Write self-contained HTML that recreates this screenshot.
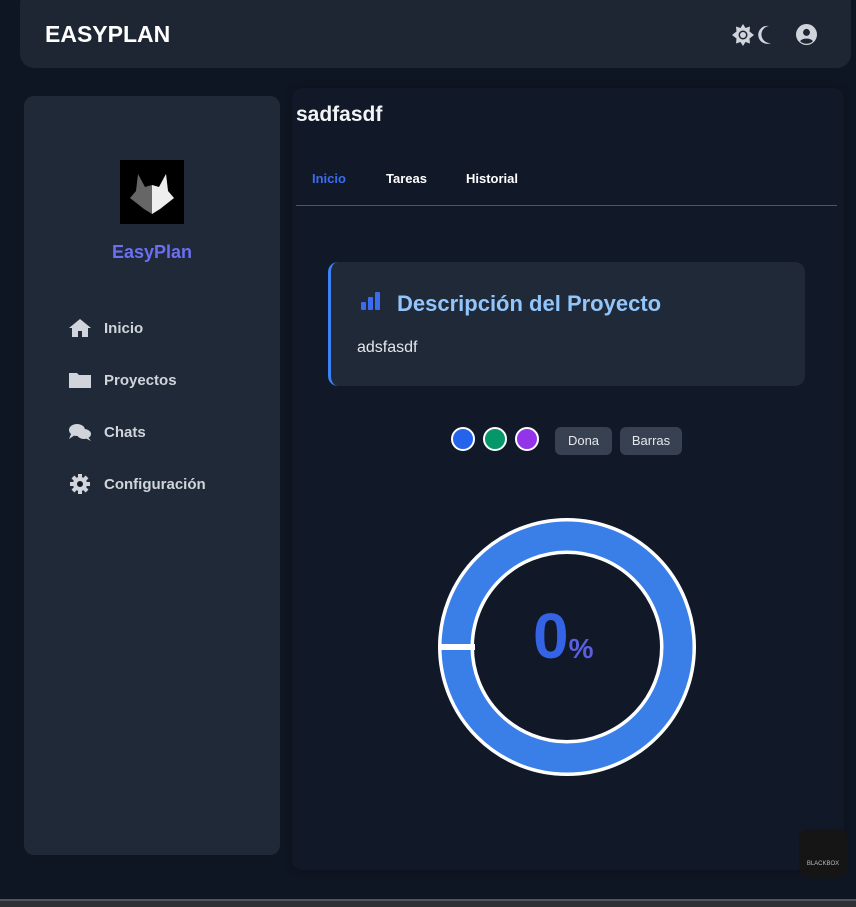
<!DOCTYPE html>
<html><head><meta charset="utf-8"><style>
*{box-sizing:border-box;margin:0;padding:0}
body{width:856px;height:907px;background:#0f1623;font-family:"Liberation Sans",sans-serif;position:relative;overflow:hidden;color:#e5e7eb}
.hdr{position:absolute;left:20px;top:-10px;width:831px;height:78px;background:#1e2533;border-radius:14px}
.hdr h1{position:absolute;left:25px;top:31px;font-size:23px;font-weight:bold;color:#fff}
.side{position:absolute;left:24px;top:96px;width:256px;height:759px;background:#1f2937;border-radius:10px}
.main{position:absolute;left:292px;top:88px;width:552px;height:782px;background:#111827;border-radius:10px;box-shadow:0 0 8px rgba(0,0,0,.3)}
.nav{position:absolute;left:44px;display:flex;align-items:center;font-size:15px;font-weight:bold;color:#d1d5db}
.nav svg{width:24px;height:20px;margin-right:12px;fill:#d1d5db}
.tab{position:absolute;top:171px;font-size:13px;font-weight:bold;color:#fff}
.card{position:absolute;left:328px;top:262px;width:477px;height:124px;background:#1f2937;border-radius:10px;border-left:3px solid #3b82f6}
.dot{position:absolute;top:427px;width:24px;height:24px;border-radius:50%;border:2px solid #fff}
.btn{position:absolute;top:427px;height:28px;background:#374151;border-radius:6px;font-size:13px;color:#e5e7eb;line-height:28px;text-align:center}
</style></head><body>
<div class="hdr"><h1>EASYPLAN</h1>
<svg style="position:absolute;left:712px;top:34px" width="22" height="22" viewBox="0 0 22 22"><polygon points="11,0 13.5,4 18,2.5 17.5,7.5 22,11 17.5,14.5 18,19.5 13.5,18 11,22 8.5,18 4,19.5 4.5,14.5 0,11 4.5,7.5 4,2.5 8.5,4" fill="#d1d5db"/><circle cx="11" cy="11" r="4.5" fill="#1e2533"/><circle cx="11" cy="11" r="3" fill="#d1d5db"/></svg>
<svg style="position:absolute;left:736px;top:34px" width="18" height="22" viewBox="0 0 18 22"><path d="M13 2A9 9 0 1 0 15 19A7.5 7.5 0 0 1 13 2Z" fill="#d1d5db"/></svg>
<svg style="position:absolute;left:776px;top:34px" width="21" height="21" viewBox="0 0 20 20"><circle cx="10" cy="10" r="10" fill="#d1d5db"/><circle cx="10" cy="8" r="3.3" fill="#1e2533"/><path d="M4 16.5C5 13 15 13 16 16.5A9 9 0 0 1 4 16.5Z" fill="#1e2533"/></svg>
</div>
<div class="side">
<div style="position:absolute;left:96px;top:64px;width:64px;height:64px;background:#000">
<svg width="64" height="64" viewBox="0 0 64 64"><path d="M18 14L25 27L32 25L39 27L46 14L48 31L54 38L40 49L32 54L24 49L10 38L16 31Z" fill="#666"/><path d="M32 25L39 27L46 14L48 31L54 38L40 49L32 54Z" fill="#eee"/></svg></div>
<div style="position:absolute;top:146px;width:100%;text-align:center;font-size:18px;font-weight:bold;color:#6b6ff0">EasyPlan</div>
</div>
<div class="nav" style="left:68px;top:318px"><svg viewBox="0 0 24 20"><path d="M12 1L1 10H4V19H10V13H14V19H20V10H23Z"/></svg>Inicio</div>
<div class="nav" style="left:68px;top:370px"><svg viewBox="0 0 24 20"><path d="M1 3H9L11 5H23V18H1Z"/></svg>Proyectos</div>
<div class="nav" style="left:68px;top:422px"><svg viewBox="0 0 24 20"><ellipse cx="9" cy="8" rx="8" ry="6"/><path d="M3 12L1 17L7 13Z"/><ellipse cx="16" cy="12" rx="7" ry="5"/><path d="M20 15L23 19L17 16Z"/></svg>Chats</div>
<div class="nav" style="left:68px;top:474px"><svg viewBox="0 0 24 20"><circle cx="12" cy="10" r="7"/><g><rect x="10" y="0" width="4" height="20"/><rect x="2" y="8" width="20" height="4"/><rect x="10" y="0" width="4" height="20" transform="rotate(45 12 10)"/><rect x="10" y="0" width="4" height="20" transform="rotate(-45 12 10)"/></g><circle cx="12" cy="10" r="3" fill="#111827"/></svg>Configuración</div>
<div class="main"></div>
<div style="position:absolute;left:296px;top:103px;font-size:21px;font-weight:bold;color:#f3f4f6">sadfasdf</div>
<div class="tab" style="left:312px;color:#3b6cf0">Inicio</div>
<div class="tab" style="left:386px">Tareas</div>
<div class="tab" style="left:466px">Historial</div>
<div style="position:absolute;left:296px;top:205px;width:541px;height:1px;background:#4b5563"></div>
<div class="card">
<svg style="position:absolute;left:28px;top:30px" width="24" height="20" viewBox="0 0 24 20"><rect x="2" y="10" width="5" height="8" rx="1" fill="#3b6cf0"/><rect x="9" y="5" width="5" height="13" rx="1" fill="#3b6cf0"/><rect x="16" y="0" width="5" height="18" rx="1" fill="#3b6cf0"/></svg>
<div style="position:absolute;left:66px;top:29px;font-size:22px;font-weight:bold;color:#93c5fd">Descripción del Proyecto</div>
<div style="position:absolute;left:26px;top:77px;font-size:16px;color:#e5e7eb">adsfasdf</div>
</div>
<div class="dot" style="left:451px;background:#2563eb"></div>
<div class="dot" style="left:483px;background:#059669"></div>
<div class="dot" style="left:515px;background:#9333ea"></div>
<div class="btn" style="left:555px;width:57px">Dona</div>
<div class="btn" style="left:620px;width:62px">Barras</div>
<svg style="position:absolute;left:437px;top:517px" width="260" height="260" viewBox="0 0 260 260"><circle cx="130" cy="130" r="111" fill="none" stroke="#fff" stroke-width="36"/><circle cx="130" cy="130" r="111" fill="none" stroke="#3a7ee8" stroke-width="29"/><rect x="4" y="127" width="34" height="6" fill="#fff"/></svg>
<div style="position:absolute;left:533px;top:602px;font-size:64px;font-weight:bold;color:#3563e6;line-height:68px">0<span style="font-size:28px;color:#5a5fe0">%</span></div>
<div style="position:absolute;left:799px;top:829px;width:48px;height:48px;background:#151515;border-radius:8px;font-size:6px;color:#bbb;text-align:center;padding-top:32px">BLACKBOX</div>
<div style="position:absolute;left:0;top:899px;width:856px;height:8px;background:#2d3035;border-top:2px solid #555"></div>
</body></html>
